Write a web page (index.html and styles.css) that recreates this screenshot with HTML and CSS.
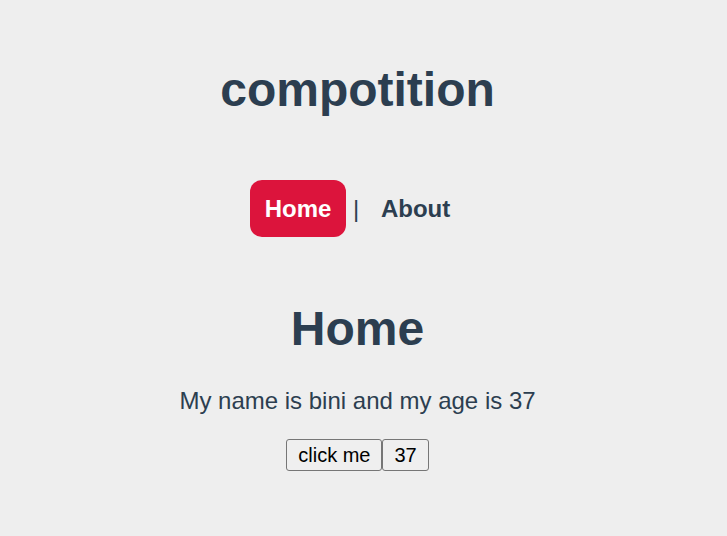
FILE: index.html
```html
<!DOCTYPE html>
<html lang="en">
<head>
  <meta charset="UTF-8" />
  <meta name="viewport" content="width=device-width, initial-scale=1.0" />
  <title>compotition</title>
  <link rel="stylesheet" href="styles.css">
</head>
<body>
  <div id="app">
    <header>
      <h1>compotition</h1>
    </header>
    <nav>
      <a href="#" class="active">Home</a> | <a href="#">About</a>
    </nav>
    <main class="home">
      <h1>Home</h1>
      <p>My name is bini and my age is 37</p>
      <div class="actions"><button>click me</button><button>37</button></div>
    </main>
  </div>
</body>
</html>
```

FILE: styles.css
```css
* { box-sizing: border-box; }
body {
  margin: 0; background-color: #eeeeee;
  font-family: 'Liberation Sans', Arial, sans-serif;
}
#app {
  width: 715px; text-align: center;
  color: #2c3e50;
}
header { padding-top: 62px; }
h1 {
  margin: 0; font-size: 48px;
  line-height: normal;
}
nav {
  margin-top: 78px; font-size: 24px;
  line-height: normal;
}
nav a {
  color: #2c3e50; text-decoration: none;
  font-weight: bold; padding: 15px;
  border-radius: 12px;
}
nav a.active {
  background-color: #dc143c; color: #fff;
}
.home { margin-top: 78px; }
.home h1 { margin-bottom: 31px; }
.home p {
  margin: 0; font-size: 24px;
  line-height: normal;
}
.actions { margin-top: 24px; }
.actions button {
  font-family: 'Liberation Sans', Arial, sans-serif;
  font-size: 20px; line-height: normal;
  color: #000; background-color: #efefef;
  border: 1px solid #767676; border-radius: 3px;
  padding: 3.5px 11px; margin: 0;
}
```
